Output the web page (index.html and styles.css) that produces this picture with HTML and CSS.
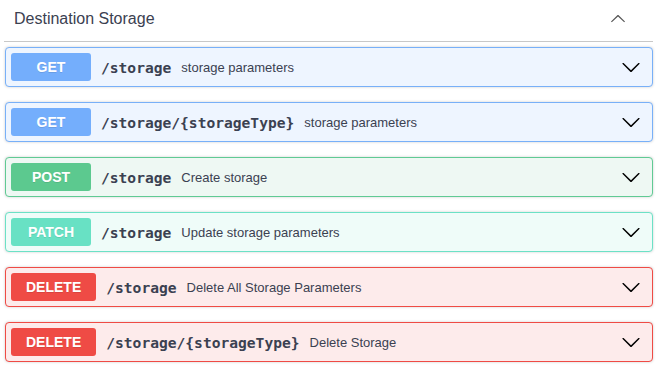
FILE: index.html
```html
<!DOCTYPE html>
<html lang="en">
<head>
    <meta charset="UTF-8">
    <meta name="viewport" content="width=device-width, initial-scale=1.0">
    <title>Destination Storage</title>
    <link rel="stylesheet" href="styles.css">
</head>
<body>
    <div class="section">
        <div class="tag">
            <span class="tag-title">Destination Storage</span>
            <svg class="tag-arrow" width="16" height="16" viewBox="0 0 20 20"><path d="M2.582 13.891c-.272.268-.709.268-.979 0s-.271-.701 0-.969l7.908-7.83c.27-.268.707-.268.979 0l7.908 7.83c.27.268.27.701 0 .969-.271.268-.709.268-.978 0L10 6.75l-7.418 7.141z"/></svg>
        </div>

        <div class="op op-get">
            <span class="method">GET</span>
            <span class="path">/storage</span>
            <span class="desc">storage parameters</span>
            <svg class="arrow" width="20" height="20" viewBox="0 0 20 20"><path d="M17.418 6.109c.272-.268.709-.268.979 0s.271.701 0 .969l-7.908 7.83c-.27.268-.707.268-.979 0l-7.908-7.83c-.27-.268-.27-.701 0-.969.271-.268.709-.268.979 0L10 13.25l7.418-7.141z"/></svg>
        </div>

        <div class="op op-get">
            <span class="method">GET</span>
            <span class="path">/storage/{storageType}</span>
            <span class="desc">storage parameters</span>
            <svg class="arrow" width="20" height="20" viewBox="0 0 20 20"><path d="M17.418 6.109c.272-.268.709-.268.979 0s.271.701 0 .969l-7.908 7.83c-.27.268-.707.268-.979 0l-7.908-7.83c-.27-.268-.27-.701 0-.969.271-.268.709-.268.979 0L10 13.25l7.418-7.141z"/></svg>
        </div>

        <div class="op op-post">
            <span class="method">POST</span>
            <span class="path">/storage</span>
            <span class="desc">Create storage</span>
            <svg class="arrow" width="20" height="20" viewBox="0 0 20 20"><path d="M17.418 6.109c.272-.268.709-.268.979 0s.271.701 0 .969l-7.908 7.83c-.27.268-.707.268-.979 0l-7.908-7.83c-.27-.268-.27-.701 0-.969.271-.268.709-.268.979 0L10 13.25l7.418-7.141z"/></svg>
        </div>

        <div class="op op-patch">
            <span class="method">PATCH</span>
            <span class="path">/storage</span>
            <span class="desc">Update storage parameters</span>
            <svg class="arrow" width="20" height="20" viewBox="0 0 20 20"><path d="M17.418 6.109c.272-.268.709-.268.979 0s.271.701 0 .969l-7.908 7.83c-.27.268-.707.268-.979 0l-7.908-7.83c-.27-.268-.27-.701 0-.969.271-.268.709-.268.979 0L10 13.25l7.418-7.141z"/></svg>
        </div>

        <div class="op op-delete">
            <span class="method">DELETE</span>
            <span class="path">/storage</span>
            <span class="desc">Delete All Storage Parameters</span>
            <svg class="arrow" width="20" height="20" viewBox="0 0 20 20"><path d="M17.418 6.109c.272-.268.709-.268.979 0s.271.701 0 .969l-7.908 7.83c-.27.268-.707.268-.979 0l-7.908-7.83c-.27-.268-.27-.701 0-.969.271-.268.709-.268.979 0L10 13.25l7.418-7.141z"/></svg>
        </div>

        <div class="op op-delete">
            <span class="method">DELETE</span>
            <span class="path">/storage/{storageType}</span>
            <span class="desc">Delete Storage</span>
            <svg class="arrow" width="20" height="20" viewBox="0 0 20 20"><path d="M17.418 6.109c.272-.268.709-.268.979 0s.271.701 0 .969l-7.908 7.83c-.27.268-.707.268-.979 0l-7.908-7.83c-.27-.268-.27-.701 0-.969.271-.268.709-.268.979 0L10 13.25l7.418-7.141z"/></svg>
        </div>
    </div>
</body>
</html>
```

FILE: styles.css
```css
body {
    font-family: "Liberation Sans", Arial, sans-serif;
    background-color: #fff;
    color: #3b4151;
    margin: 0;
}
.section {
    padding: 0 14px 0 5px;
}
.tag {
    display: flex;
    align-items: center;
    justify-content: space-between;
    height: 41px;
    padding: 0 27px 0 10px;
    margin: 0 0 5px -1px;
    border-bottom: 1px solid #c8c8c8;
}
.tag-title {
    font-size: 16px;
    padding-bottom: 3px;
}
.tag-arrow {
    fill: #555;
    margin-bottom: 3px;
}
.op {
    display: flex;
    align-items: center;
    padding: 5px;
    margin-bottom: 15px;
    border: 1px solid #000;
    border-radius: 4px;
    box-shadow: 0 0 3px rgba(0, 0, 0, 0.19);
}
.method {
    min-width: 80px;
    padding: 6px 15px;
    box-sizing: border-box;
    line-height: 16px;
    font-size: 14px;
    font-weight: bold;
    text-align: center;
    color: #fff;
    border-radius: 3px;
    text-shadow: 0 1px 0 rgba(0, 0, 0, 0.1);
}
.path {
    padding: 0 10px;
    font-family: "DejaVu Sans Mono", monospace;
    font-weight: bold;
    font-size: 14.6px;
    color: #3b4151;
}
.desc {
    flex: 1;
    font-size: 13px;
    color: #3b4151;
}
.arrow {
    margin-right: 6px;
    fill: #000;
}
.op-get {
    background-color: #eef5ff;
    border-color: #78b0f8;
}
.op-get .method {
    background-color: #74aefc;
}
.op-post {
    background-color: #eef8f3;
    border-color: #60ca94;
}
.op-post .method {
    background-color: #5cc98f;
}
.op-patch {
    background-color: #effcf9;
    border-color: #6ce1c6;
}
.op-patch .method {
    background-color: #68e1c4;
}
.op-delete {
    background-color: #fdebeb;
    border-color: #ef4b45;
}
.op-delete .method {
    background-color: #ef4b45;
}
```
